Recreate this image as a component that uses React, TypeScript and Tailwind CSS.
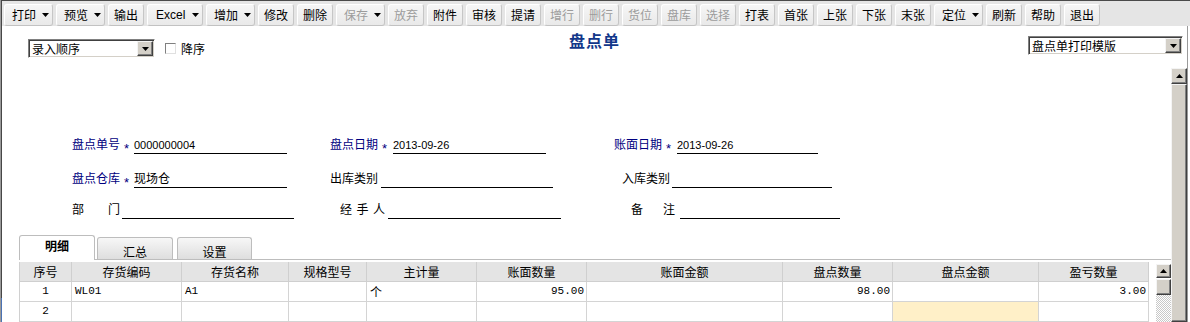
import React from 'react';

type Tool = { t: string; dd?: boolean; off?: boolean; wide?: boolean };

const tools: Tool[] = [
  { t: '打印', dd: true },
  { t: '预览', dd: true },
  { t: '输出' },
  { t: 'Excel', dd: true, wide: true },
  { t: '增加', dd: true },
  { t: '修改' },
  { t: '删除' },
  { t: '保存', dd: true, off: true },
  { t: '放弃', off: true },
  { t: '附件' },
  { t: '审核' },
  { t: '提请' },
  { t: '增行', off: true },
  { t: '删行', off: true },
  { t: '货位', off: true },
  { t: '盘库', off: true },
  { t: '选择', off: true },
  { t: '打表' },
  { t: '首张' },
  { t: '上张' },
  { t: '下张' },
  { t: '末张' },
  { t: '定位', dd: true },
  { t: '刷新' },
  { t: '帮助' },
  { t: '退出' },
];

const cols = [
  { h: '序号', w: 'w-[52px]', a: 'justify-center' },
  { h: '存货编码', w: 'w-[110px]', a: 'justify-start pl-[3px]' },
  { h: '存货名称', w: 'w-[107px]', a: 'justify-start pl-[3px]' },
  { h: '规格型号', w: 'w-[78px]', a: 'justify-start pl-[3px]' },
  { h: '主计量', w: 'w-[110px]', a: 'justify-start pl-[3px]' },
  { h: '账面数量', w: 'w-[110px]', a: 'justify-end pr-[2px]' },
  { h: '账面金额', w: 'w-[196px]', a: 'justify-end pr-[2px]' },
  { h: '盘点数量', w: 'w-[110px]', a: 'justify-end pr-[2px]' },
  { h: '盘点金额', w: 'w-[146px]', a: 'justify-end pr-[2px]' },
  { h: '盈亏数量', w: 'w-[110px]', a: 'justify-end pr-[2px]' },
];

const rows = [
  ['1', 'WL01', 'A1', '', '个', '95.00', '', '98.00', '', '3.00'],
  ['2', '', '', '', '', '', '', '', '', ''],
];

const Tri = ({ up = false }: { up?: boolean }) => (
  <svg width="7" height="4" viewBox="0 0 7 4" className="block">
    <polygon points={up ? '0,4 7,4 3.5,0' : '0,0 7,0 3.5,4'} fill="#000" />
  </svg>
);

const raised =
  'bg-[#d4d0c8] border border-t-[#f4f4f4] border-l-[#f4f4f4] border-r-[#404040] border-b-[#404040] shadow-[inset_-1px_-1px_0_#808080]';

const Select = ({ text, cls }: { text: string; cls: string }) => (
  <div
    className={`flex bg-white border border-t-[#808080] border-l-[#808080] border-r-white border-b-white shadow-[inset_1px_1px_0_#404040,inset_-1px_-1px_0_#d4d0c8] p-[1px] ${cls}`}
  >
    <span className="flex-1 pl-[2px] text-[12px] leading-[15px] text-black">{text}</span>
    <div className={`w-[16px] h-full flex items-center justify-center ${raised}`}>
      <Tri />
    </div>
  </div>
);

const Line = ({ w, children }: { w: string; children?: React.ReactNode }) => (
  <div className={`${w} h-[18px] border-b border-black flex items-end pb-[2px] text-[11px] leading-[12px] font-['Liberation_Sans',sans-serif] text-black`}>
    {children}
  </div>
);

const Star = ({ w }: { w: string }) => (
  <span className={`${w} text-[13px] leading-[12px] mb-[-1px] pl-[4px] font-['Liberation_Sans',sans-serif] text-[#000080]`}>*</span>
);

export default function App() {
  return (
    <div className="w-[1190px] h-[322px] overflow-hidden bg-white flex font-['Noto_Sans_CJK_SC','Noto_Sans',sans-serif] text-black">
      {/* left window edge */}
      <div className="w-[2px] flex flex-col border-l border-[#9a9a9a]">
        <div className="flex-1 bg-[#474747]" />
        <div className="h-[24px] bg-[#4a72b4]" />
      </div>

      <div className="flex-1 flex flex-col">
        {/* toolbar */}
        <div className="h-[28px] bg-[#e5e5e5] border-t border-[#4a4a4a] flex items-start pt-[3px] pl-[2px] gap-[3px]">
          {tools.map((b) => (
            <div
              key={b.t}
              className={`h-[22px] flex items-center rounded-[3px] border border-t-white border-l-white border-r-[#c6c6c6] border-b-[#c2c2c2] bg-gradient-to-b from-[#f6f6f6] to-[#e9e9e9] text-[12px] ${
                b.off ? 'text-[#9c9c9c]' : 'text-black'
              } ${
                b.wide
                  ? 'w-[56px] justify-between pl-[8px] pr-[3px] font-[Liberation_Sans,sans-serif]'
                  : b.dd
                  ? 'w-[49px] justify-between pl-[7px] pr-[3px]'
                  : 'w-[36px] justify-center'
              }`}
            >
              <span>{b.t}</span>
              {b.dd && <Tri />}
            </div>
          ))}
        </div>

        <div className="flex-1 flex">
          <div className="w-[1185px] flex flex-col">
            {/* top row */}
            <div className="h-[42px] grid grid-cols-[1fr_auto_1fr]">
              <div className="flex items-center gap-[10px] pl-[26px] pt-[13px] self-start">
                <Select text="录入顺序" cls="w-[127px] h-[19px]" />
                <div className="flex items-center gap-[5px]">
                  <div className="w-[11px] h-[11px] bg-white border border-t-[#808080] border-l-[#808080] border-r-[#e0e0e0] border-b-[#e0e0e0]" />
                  <span className="text-[12px] leading-[14px]">降序</span>
                </div>
              </div>
              <div className="pt-[5px] text-[16px] leading-[18px] font-bold tracking-[1px] text-[#12378a]">盘点单</div>
              <div className="flex justify-end pr-[4px] pt-[10px] self-start">
                <Select text="盘点单打印模版" cls="w-[155px] h-[19px]" />
              </div>
            </div>

            <div className="flex-1 flex">
              {/* scroll content */}
              <div className="w-[1169px] flex flex-col">
                {/* form row 1 */}
                <div className="mt-[66px] h-[20px] flex items-end pl-[70px] text-[12px] leading-[14px]">
                  <div className="w-[258px] flex items-end">
                    <span className="w-[48px] pb-[3px] text-[#000080]">盘点单号</span>
                    <Star w="w-[14px]" />
                    <Line w="w-[153px]">0000000004</Line>
                  </div>
                  <div className="w-[284px] flex items-end">
                    <span className="w-[48px] pb-[3px] text-[#000080]">盘点日期</span>
                    <Star w="w-[15px]" />
                    <Line w="w-[153px]">2013-09-26</Line>
                  </div>
                  <div className="flex items-end">
                    <span className="w-[48px] pb-[3px] text-[#000080]">账面日期</span>
                    <Star w="w-[15px]" />
                    <Line w="w-[141px]">2013-09-26</Line>
                  </div>
                </div>

                {/* form row 2 */}
                <div className="mt-[14px] h-[20px] flex items-end pl-[70px] text-[12px] leading-[14px]">
                  <div className="w-[258px] flex items-end">
                    <span className="w-[48px] pb-[3px] text-[#000080]">盘点仓库</span>
                    <Star w="w-[14px]" />
                    <Line w="w-[153px]">
                      <span className="font-['Noto_Sans_CJK_SC',sans-serif] text-[12px] leading-[14px]">现场仓</span>
                    </Line>
                  </div>
                  <div className="w-[292px] flex items-end">
                    <span className="w-[51px] pb-[3px]">出库类别</span>
                    <Line w="w-[172px]" />
                  </div>
                  <div className="flex items-end">
                    <span className="w-[50px] pb-[3px]">入库类别</span>
                    <Line w="w-[160px]" />
                  </div>
                </div>

                {/* form row 3 */}
                <div className="mt-[11px] h-[20px] flex items-end pl-[70px] text-[12px] leading-[14px]">
                  <div className="w-[268px] flex items-end">
                    <span className="w-[48px] pb-[3px] flex justify-between">
                      <span>部</span>
                      <span>门</span>
                    </span>
                    <span className="w-[2px]" />
                    <Line w="w-[172px]" />
                  </div>
                  <div className="w-[291px] flex items-end">
                    <span className="w-[45px] pb-[3px] flex justify-between">
                      <span>经</span>
                      <span>手</span>
                      <span>人</span>
                    </span>
                    <span className="w-[3px]" />
                    <Line w="w-[173px]" />
                  </div>
                  <div className="flex items-end">
                    <span className="w-[44px] pb-[3px] flex justify-between">
                      <span>备</span>
                      <span>注</span>
                    </span>
                    <span className="w-[5px]" />
                    <Line w="w-[160px]" />
                  </div>
                </div>

                {/* tabs + grid */}
                <div className="mt-[16px] ml-[17px] flex flex-col">
                  <div className="h-[25px] flex items-end border-b border-[#bdbdbd] text-[12px] leading-[14px]">
                    <div className="relative z-10 -mb-px w-[76px] h-[25px] bg-white border-x border-t border-[#bdbdbd] rounded-t-[3px] flex justify-center pt-[3px] font-bold">
                      明细
                    </div>
                    <div className="ml-[2px] w-[76px] h-[22px] border-x border-t border-[#bdbdbd] rounded-t-[3px] bg-gradient-to-b from-[#f7f7f7] to-[#dedede] flex justify-center pt-[7px]">
                      汇总
                    </div>
                    <div className="ml-[4px] w-[75px] h-[22px] border-x border-t border-[#bdbdbd] rounded-t-[3px] bg-gradient-to-b from-[#f7f7f7] to-[#dedede] flex justify-center pt-[7px]">
                      设置
                    </div>
                  </div>

                  <div className="mt-[2px] flex">
                    <div className="border-l border-[#d0d0d0] flex flex-col">
                      <div className="flex h-[20px] bg-[#e4e4e4] text-[12px]">
                        {cols.map((c) => (
                          <div key={c.h} className={`${c.w} flex items-center justify-center border-r border-b border-[#cfcfcf]`}>
                            {c.h}
                          </div>
                        ))}
                      </div>
                      {rows.map((r, ri) => (
                        <div key={ri} className="flex h-[20px]">
                          {r.map((v, ci) => (
                            <div
                              key={ci}
                              className={`${cols[ci].w} ${cols[ci].a} flex items-center border-r border-b border-[#d4d4d4] ${
                                ri === 1 && ci === 8 ? 'bg-[#fff0c8]' : 'bg-white'
                              } ${
                                ci === 4
                                  ? "text-[12px] font-['Noto_Sans_CJK_SC',sans-serif]"
                                  : "text-[11px] font-['Liberation_Mono',monospace]"
                              }`}
                            >
                              {v}
                            </div>
                          ))}
                        </div>
                      ))}
                    </div>
                    <div className="w-[7px]" />
                    <div className="w-[15px] pt-[2px] flex flex-col">
                      <div className={`h-[14px] flex items-center justify-center ${raised}`}>
                        <Tri up />
                      </div>
                      <div className={`mt-[1px] h-[16px] ${raised}`} />
                      <div className="flex-1 bg-[image:repeating-conic-gradient(#c8c8c8_0_25%,#ffffff_0_50%)] bg-[length:2px_2px]" />
                    </div>
                  </div>
                </div>
              </div>

              {/* main vertical scrollbar */}
              <div className="w-[16px] flex flex-col">
                <div className={`h-[16px] flex items-center justify-center ${raised}`}>
                  <Tri up />
                </div>
                <div className={`flex-1 ${raised}`} />
              </div>
            </div>
          </div>
          <div className="w-[1px] bg-[#9a9a9a]" />
          <div className="flex-1 bg-white" />
        </div>
      </div>
    </div>
  );
}
